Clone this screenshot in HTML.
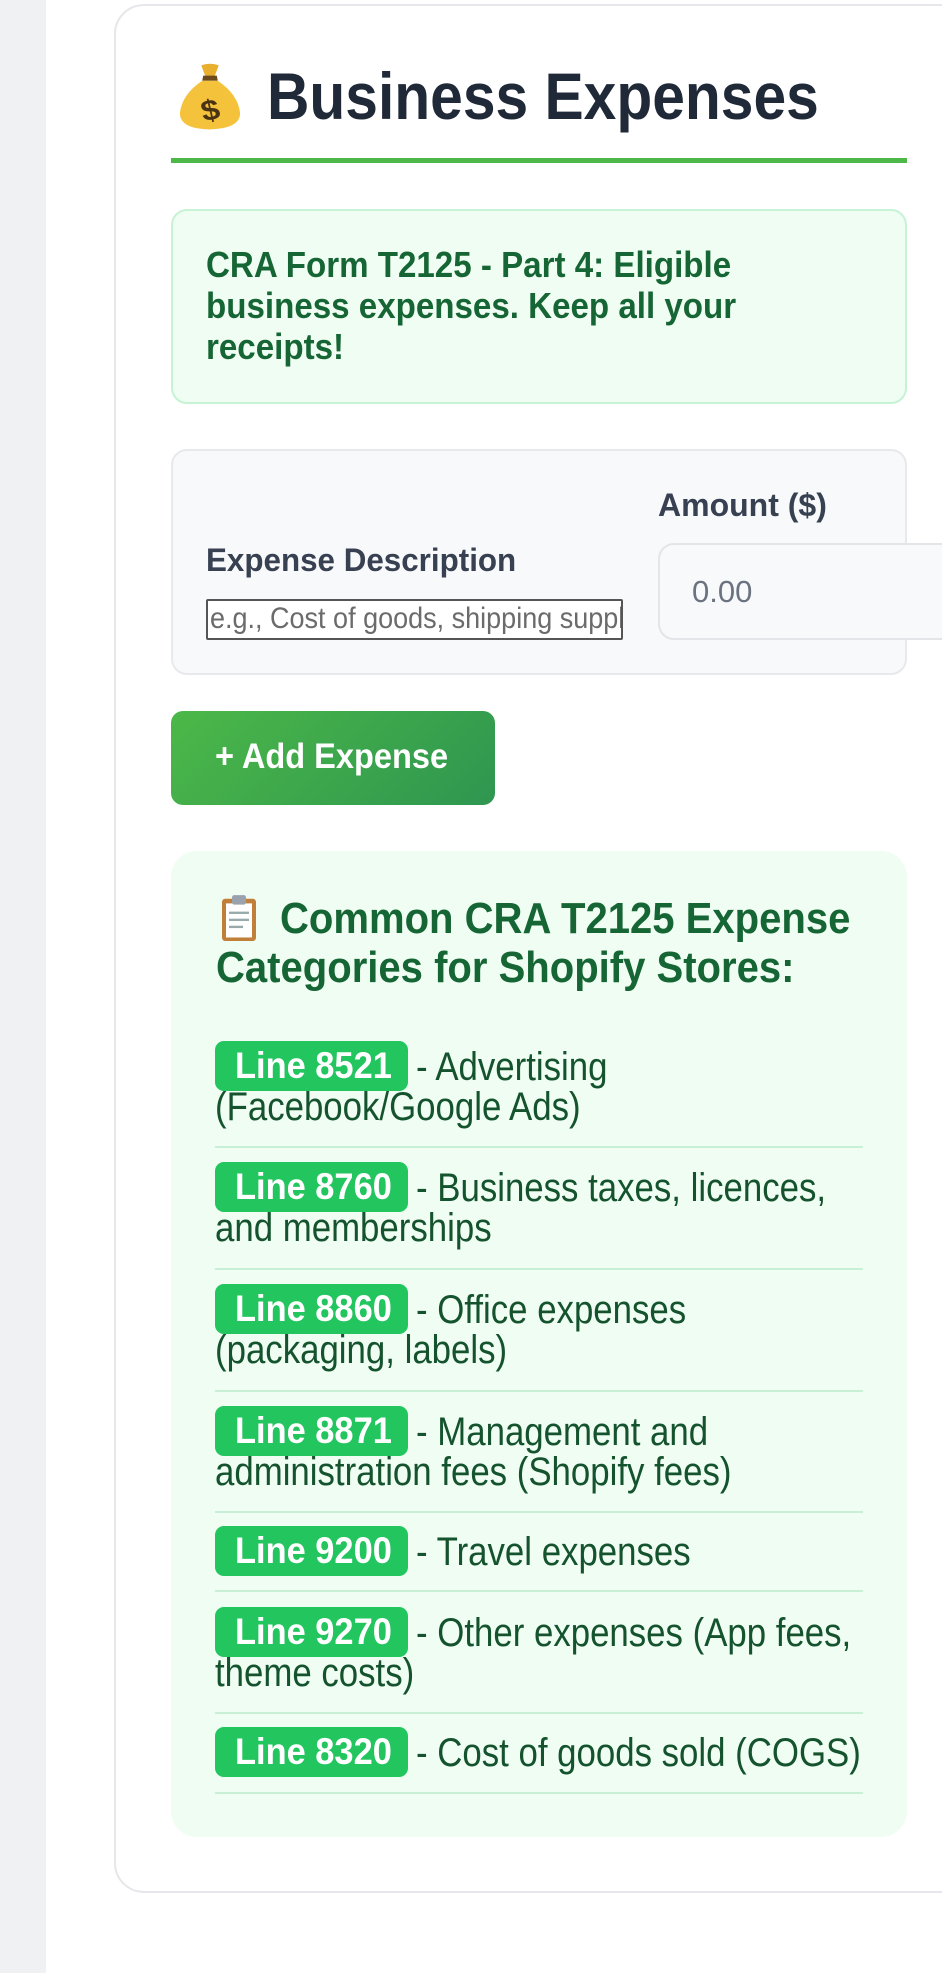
<!DOCTYPE html>
<html><head><meta charset="utf-8"><style>
*{margin:0;padding:0;box-sizing:border-box}
body{width:942px;height:1973px;background:#fff;position:relative;overflow:hidden;font-family:"Liberation Sans",Arial,sans-serif}
.a{position:absolute}
.t{position:absolute;white-space:nowrap;line-height:1;transform-origin:left top}
.badge{position:absolute;left:215px;width:193px;height:50px;background:#22c55e;border-radius:9px;overflow:hidden}
.badge span{position:absolute;left:20px;top:6px;color:#fff;font-weight:bold;font-size:37px;line-height:1;white-space:nowrap;transform:scaleX(0.93);transform-origin:left top}
.li{position:absolute;white-space:nowrap;font-size:40px;line-height:1;color:#14532d;transform:scaleX(0.87);transform-origin:left top}
.sep{position:absolute;left:215px;width:648px;height:2px;background:#c8f0d6}
</style></head><body>
<div class="a" style="left:0;top:0;width:46px;height:1973px;background:#f0f1f3"></div>
<div class="a" style="left:114px;top:4px;width:900px;height:1889px;border:2px solid #e6e7ea;border-radius:30px;background:#fff"></div>

<svg class="a" style="left:176px;top:62px" width="68" height="70" viewBox="0 0 70 82" preserveAspectRatio="none">
<path d="M26 4 Q35 0 44 4 L40 16 Q35 18 30 16 Z" fill="#e8b02e"/>
<path d="M28 16 L42 16 L43 22 L27 22 Z" fill="#6b4a1c"/>
<path d="M27 22 Q6 38 4 60 Q4 78 34 79 Q66 78 66 60 Q64 38 43 22 Z" fill="#f5c33b"/>
<text x="35" y="68" font-family="Liberation Sans" font-weight="bold" font-size="34" fill="#4a3313" text-anchor="middle" transform="rotate(-12 35 55)">$</text>
</svg>
<div class="t" style="left:267px;top:63px;font-size:66px;font-weight:bold;color:#1f2937;transform:scaleX(0.89)">Business Expenses</div>
<div class="a" style="left:171px;top:158px;width:736px;height:5px;background:#4cb848"></div>

<div class="a" style="left:171px;top:209px;width:736px;height:195px;background:#effdf3;border:2px solid #c6f3d4;border-radius:16px"></div>
<div class="t" style="left:206px;top:247px;font-size:36px;font-weight:bold;color:#166534;transform:scaleX(0.92)">CRA Form T2125 - Part 4: Eligible</div>
<div class="t" style="left:206px;top:288px;font-size:36px;font-weight:bold;color:#166534;transform:scaleX(0.92)">business expenses. Keep all your</div>
<div class="t" style="left:206px;top:329px;font-size:36px;font-weight:bold;color:#166534;transform:scaleX(0.92)">receipts!</div>

<div class="a" style="left:171px;top:449px;width:736px;height:226px;background:#f8f9fa;border:2px solid #e8e9ec;border-radius:16px"></div>
<div class="t" style="left:658px;top:489px;font-size:32px;font-weight:bold;color:#374151">Amount ($)</div>
<div class="t" style="left:206px;top:544px;font-size:32px;font-weight:bold;color:#374151;transform:scaleX(0.98)">Expense Description</div>
<div class="a" style="left:206px;top:599px;width:417px;height:41px;border:2px solid #555;border-radius:2px;background:#fff;overflow:hidden">
<div class="t" style="left:2px;top:3px;font-size:30px;color:#6b6b6b;transform:scaleX(0.9)">e.g., Cost of goods, shipping supplies</div></div>
<div class="a" style="left:658px;top:543px;width:320px;height:97px;border:2px solid #e3e5e8;border-radius:16px;background:#f8f9fa"></div>
<div class="t" style="left:692px;top:576px;font-size:31px;color:#6b7280">0.00</div>

<div class="a" style="left:171px;top:711px;width:324px;height:94px;border-radius:12px;background:linear-gradient(135deg,#4cb848,#2e9650)"></div>
<div class="t" style="left:215px;top:739px;font-size:35px;font-weight:bold;color:#fff;transform:scaleX(0.93)">+ Add Expense</div>

<div class="a" style="left:171px;top:851px;width:736px;height:986px;background:#effdf3;border-radius:26px"></div>
<svg class="a" style="left:217px;top:894px" width="44" height="47" viewBox="0 0 44 40" preserveAspectRatio="none">
<rect x="5" y="4" width="34" height="36" rx="3" fill="#c0803a"/>
<rect x="9" y="8" width="26" height="29" fill="#fff"/>
<rect x="15" y="1" width="14" height="8" rx="2" fill="#9aa3ad"/>
<rect x="12" y="15" width="20" height="2" fill="#9aa"/><rect x="12" y="21" width="20" height="2" fill="#9aa"/><rect x="12" y="27" width="14" height="2" fill="#9aa"/>
</svg>
<div class="t" style="left:280px;top:897px;font-size:44px;font-weight:bold;color:#166534;transform:scaleX(0.91)">Common CRA T2125 Expense</div>
<div class="t" style="left:216px;top:946px;font-size:44px;font-weight:bold;color:#166534;transform:scaleX(0.91)">Categories for Shopify Stores:</div>

<div class="badge" style="top:1041px"><span>Line 8521</span></div>
<div class="li" style="left:416px;top:1047px">- Advertising</div>
<div class="li" style="left:215px;top:1087px">(Facebook/Google Ads)</div>
<div class="sep" style="top:1146px"></div>

<div class="badge" style="top:1162px"><span>Line 8760</span></div>
<div class="li" style="left:416px;top:1168px">- Business taxes, licences,</div>
<div class="li" style="left:215px;top:1208px">and memberships</div>
<div class="sep" style="top:1268px"></div>

<div class="badge" style="top:1284px"><span>Line 8860</span></div>
<div class="li" style="left:416px;top:1290px">- Office expenses</div>
<div class="li" style="left:215px;top:1330px">(packaging, labels)</div>
<div class="sep" style="top:1390px"></div>

<div class="badge" style="top:1406px"><span>Line 8871</span></div>
<div class="li" style="left:416px;top:1412px">- Management and</div>
<div class="li" style="left:215px;top:1452px">administration fees (Shopify fees)</div>
<div class="sep" style="top:1511px"></div>

<div class="badge" style="top:1526px"><span>Line 9200</span></div>
<div class="li" style="left:416px;top:1532px">- Travel expenses</div>
<div class="sep" style="top:1590px"></div>

<div class="badge" style="top:1607px"><span>Line 9270</span></div>
<div class="li" style="left:416px;top:1613px">- Other expenses (App fees,</div>
<div class="li" style="left:215px;top:1653px">theme costs)</div>
<div class="sep" style="top:1712px"></div>

<div class="badge" style="top:1727px"><span>Line 8320</span></div>
<div class="li" style="left:416px;top:1733px">- Cost of goods sold (COGS)</div>
<div class="sep" style="top:1792px"></div>
</body></html>
